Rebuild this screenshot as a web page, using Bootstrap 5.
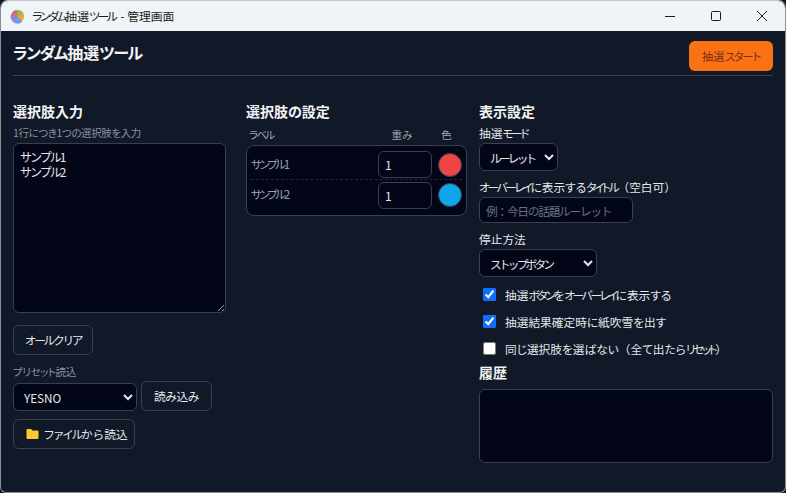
<!DOCTYPE html>
<html lang="ja">
<head>
<meta charset="utf-8">
<title>ランダム抽選ツール - 管理画面</title>
<link href="https://cdn.jsdelivr.net/npm/bootstrap@5.3.0/dist/css/bootstrap.min.css" rel="stylesheet">
<style>
html,body{height:100%;margin:0;background:#0f1623;overflow:hidden}
body{font-family:"Noto Sans CJK JP","Noto Sans",sans-serif;font-feature-settings:"palt";font-size:11.7px;color:#e5e7eb}
.kn{letter-spacing:-2.3px}
.fw{font-feature-settings:normal}
.appwin{height:493px;width:786px;display:flex;flex-direction:column;background:#111827;border:1px solid #8a8f96;border-top-color:#c4c8cc;border-radius:8px 8px 6px 6px;overflow:hidden}
.titlebar{height:30px;background:#eff4f9;color:#1b1b1b;flex:none;font-size:11.8px;padding-left:9px;gap:7px}
.winbtns{margin-left:auto;display:flex}
.winbtn{width:46px;height:30px;display:flex;align-items:center;justify-content:center}
.mainpane{padding:10px 12px 0;flex:1}
.headrow{height:35px;border-bottom:1px solid #374151}
.headrow h1{font-size:16px;font-weight:700;color:#f3f4f6;margin:0 0 10px}
.headrow h1 .kn{letter-spacing:-1.3px}
.startbtn{width:84px;height:30px;background:#f97316;border:0;border-radius:6px;color:#7c2d12;font-size:11.2px;padding:0;margin-bottom:4px}
.columns{display:flex;margin-top:25px}
.colone{width:213px;margin-right:20px}
.coltwo{width:221px;margin-right:12px}
.colthree{width:294px}
h2.sect{font-size:14px;font-weight:700;color:#f3f4f6;margin:0;line-height:20px}
.hint{font-size:10.5px;color:#8b93a1;line-height:16px;margin-top:4px;letter-spacing:-.4px}
.hint .kn{letter-spacing:-.4px}
.field{background:#020617;border:1px solid #374151;border-radius:6px;color:#e5e7eb;font-size:11.7px;box-shadow:none}
.field:focus{background:#020617;color:#e5e7eb}
textarea.field{display:block;width:213px;height:170px;padding:5px 6px;line-height:15px;margin-top:2px;font-size:12px;letter-spacing:-2px}
.ghost{background:transparent;border:1px solid #374151;border-radius:6px;color:#e5e7eb;font-size:11.7px;padding:0;height:30px}
.clearbtn{width:80px;margin-top:12px}
.presetlbl{margin-top:9px;margin-bottom:3px;line-height:16px}
.drop{appearance:auto;padding:0 0 0 6px;height:28px;color-scheme:dark}
.tightsel{letter-spacing:-2.8px}
.presetsel{width:124px;margin-top:0}
.loadbtn{width:71px;margin-left:4px;margin-top:-2px;letter-spacing:-.4px}
.filebtn{width:122px;margin-top:8px;gap:4px;padding-left:6px}
.tblhead{font-size:10.5px;color:#9ca3af;height:14px;margin-top:7px;padding:0 8px 0 3px}
.tblhead .kn{letter-spacing:-1.7px}
.tblhead .weight{margin-left:auto;width:40px;text-align:center;margin-right:12px}
.tblhead .clr{width:25px;text-align:center;margin-right:0}
.choices{background:#020617;border:1px solid #374151;border-radius:8px;padding:3px 4px;margin-top:3px;height:71px}
.choice{height:31px;font-size:11.5px;color:#9ca3af;gap:6px}
.choice+.choice{border-top:1px dashed #1f2937;margin-top:-1px}
.choice .lab{flex:1}
.num{width:54px;height:27px;padding:0 6px;font-size:12px}
.dot{width:24px;height:24px;border-radius:50%;border:1px solid #374151;flex:none}
.lbl{font-size:11.7px;color:#e5e7eb;line-height:16px}
.lblfirst{margin-top:4px}
.modesel{width:79px;margin-top:2px;height:28px}
.titleinput{width:154px;height:26px;padding:0 6px;font-size:11.7px;margin-top:2px}
.titleinput::placeholder{color:#6b7280;opacity:1;letter-spacing:-1.25px}
.stopsel{width:118px;height:28px;margin-top:2px}
.chk{margin-left:4px;height:27px;gap:9px;font-size:11.7px}
.chk input{width:13px;height:13px;margin:0;flex:none;accent-color:#0d6efd}
.histtitle{margin-top:4px}
.histbox{height:74px;width:294px;margin-top:7px}
</style>
</head>
<body>
<div class="appwin">
  <div class="titlebar d-flex align-items-center">
    <svg width="15" height="15" viewBox="0 0 16 16"><circle cx="8" cy="8" r="7" fill="#f0a040"/><path d="M8 8V1a7 7 0 0 0-6 3.5z" fill="#e8655a"/><path d="M8 8L2 4.500a7 7 0 0 0 1 9z" fill="#9a7fd0"/><path d="M8 8L3 13.500a7 7 0 0 0 10 0z" fill="#6aa0e0"/><path d="M8 8V1a7 7 0 0 1 6 3.500z" fill="#8cc04a"/></svg>
    <span><span class="kn">ランダム</span>抽選<span class="kn">ツー</span>ル - 管理画面</span>
    <div class="winbtns">
      <div class="winbtn"><svg width="12" height="12" viewBox="0 0 12 12"><path d="M1 6.500h10" stroke="#1b1b1b" fill="none"/></svg></div>
      <div class="winbtn"><svg width="12" height="12" viewBox="0 0 12 12"><rect x="1.500" y="1.500" width="9" height="9" rx="1" stroke="#1b1b1b" fill="none"/></svg></div>
      <div class="winbtn"><svg width="12" height="12" viewBox="0 0 12 12"><path d="M1 1l10 10M11 1L1 11" stroke="#1b1b1b" fill="none"/></svg></div>
    </div>
  </div>
  <div class="mainpane">
    <div class="headrow d-flex justify-content-between align-items-center">
      <h1><span class="kn">ランダム</span>抽選<span class="kn">ツール</span></h1>
      <button class="startbtn" type="button">抽選<span class="kn">スタート</span></button>
    </div>
    <div class="columns">
      <section class="colone">
        <h2 class="sect">選択肢入力</h2>
        <div class="hint">1行につき1つの選択肢を入力</div>
        <textarea class="field form-control">サンプル1
サンプル2</textarea>
        <button class="ghost clearbtn d-block" type="button"><span class="kn">オールクリア</span></button>
        <div class="hint presetlbl"><span class="kn">プリセット</span>読込</div>
        <div class="d-flex align-items-start">
          <select class="field drop presetsel"><option>YESNO</option></select>
          <button class="ghost loadbtn" type="button">読み込み</button>
        </div>
        <button class="ghost filebtn d-flex align-items-center justify-content-center" type="button">
          <svg width="13" height="12" viewBox="0 0 13 12"><path d="M0.500 2a1 1 0 0 1 1-1h3.500l1.500 1.500H11.500a1 1 0 0 1 1 1V10a1 1 0 0 1-1 1h-10a1 1 0 0 1-1-1z" fill="#fcc933"/></svg>
          <span><span class="kn">ファイル</span>から読込</span>
        </button>
      </section>
      <section class="coltwo">
        <h2 class="sect">選択肢の設定</h2>
        <div class="tblhead d-flex align-items-center"><span class="kn">ラベル</span><span class="weight">重み</span><span class="clr">色</span></div>
        <div class="choices">
          <div class="choice d-flex align-items-center"><span class="lab"><span class="kn">サンプル</span>1</span><input class="field num" value="1"><span class="dot" style="background:#ef4444"></span></div>
          <div class="choice d-flex align-items-center"><span class="lab"><span class="kn">サンプル</span>2</span><input class="field num" value="1"><span class="dot" style="background:#0ea5e9"></span></div>
        </div>
      </section>
      <section class="colthree">
        <h2 class="sect">表示設定</h2>
        <div class="lbl lblfirst">抽選<span class="kn">モード</span></div>
        <select class="field drop modesel tightsel d-block"><option>ルーレット</option></select>
        <div class="lbl mt-2"><span class="kn">オーバーレイ</span>に表示する<span class="kn">タイトル</span><span class="fw">（空白可）</span></div>
        <input class="field titleinput d-block" placeholder="例：今日の話題ルーレット">
        <div class="lbl mt-2">停止方法</div>
        <select class="field drop stopsel tightsel d-block"><option>ストップボタン</option></select>
        <label class="chk d-flex align-items-center mt-1"><input type="checkbox" checked><span>抽選<span class="kn">ボタン</span>を<span class="kn">オーバーレイ</span>に表示する</span></label>
        <label class="chk d-flex align-items-center"><input type="checkbox" checked><span>抽選結果確定時に紙吹雪を出す</span></label>
        <label class="chk d-flex align-items-center"><input type="checkbox"><span>同じ選択肢を選ばない<span class="fw">（</span>全て出たら<span class="kn">リセット</span>）</span></label>
        <h2 class="sect histtitle">履歴</h2>
        <div class="field histbox"></div>
      </section>
    </div>
  </div>
</div>
<script src="https://cdn.jsdelivr.net/npm/bootstrap@5.3.0/dist/js/bootstrap.bundle.min.js"></script>
</body>
</html>
